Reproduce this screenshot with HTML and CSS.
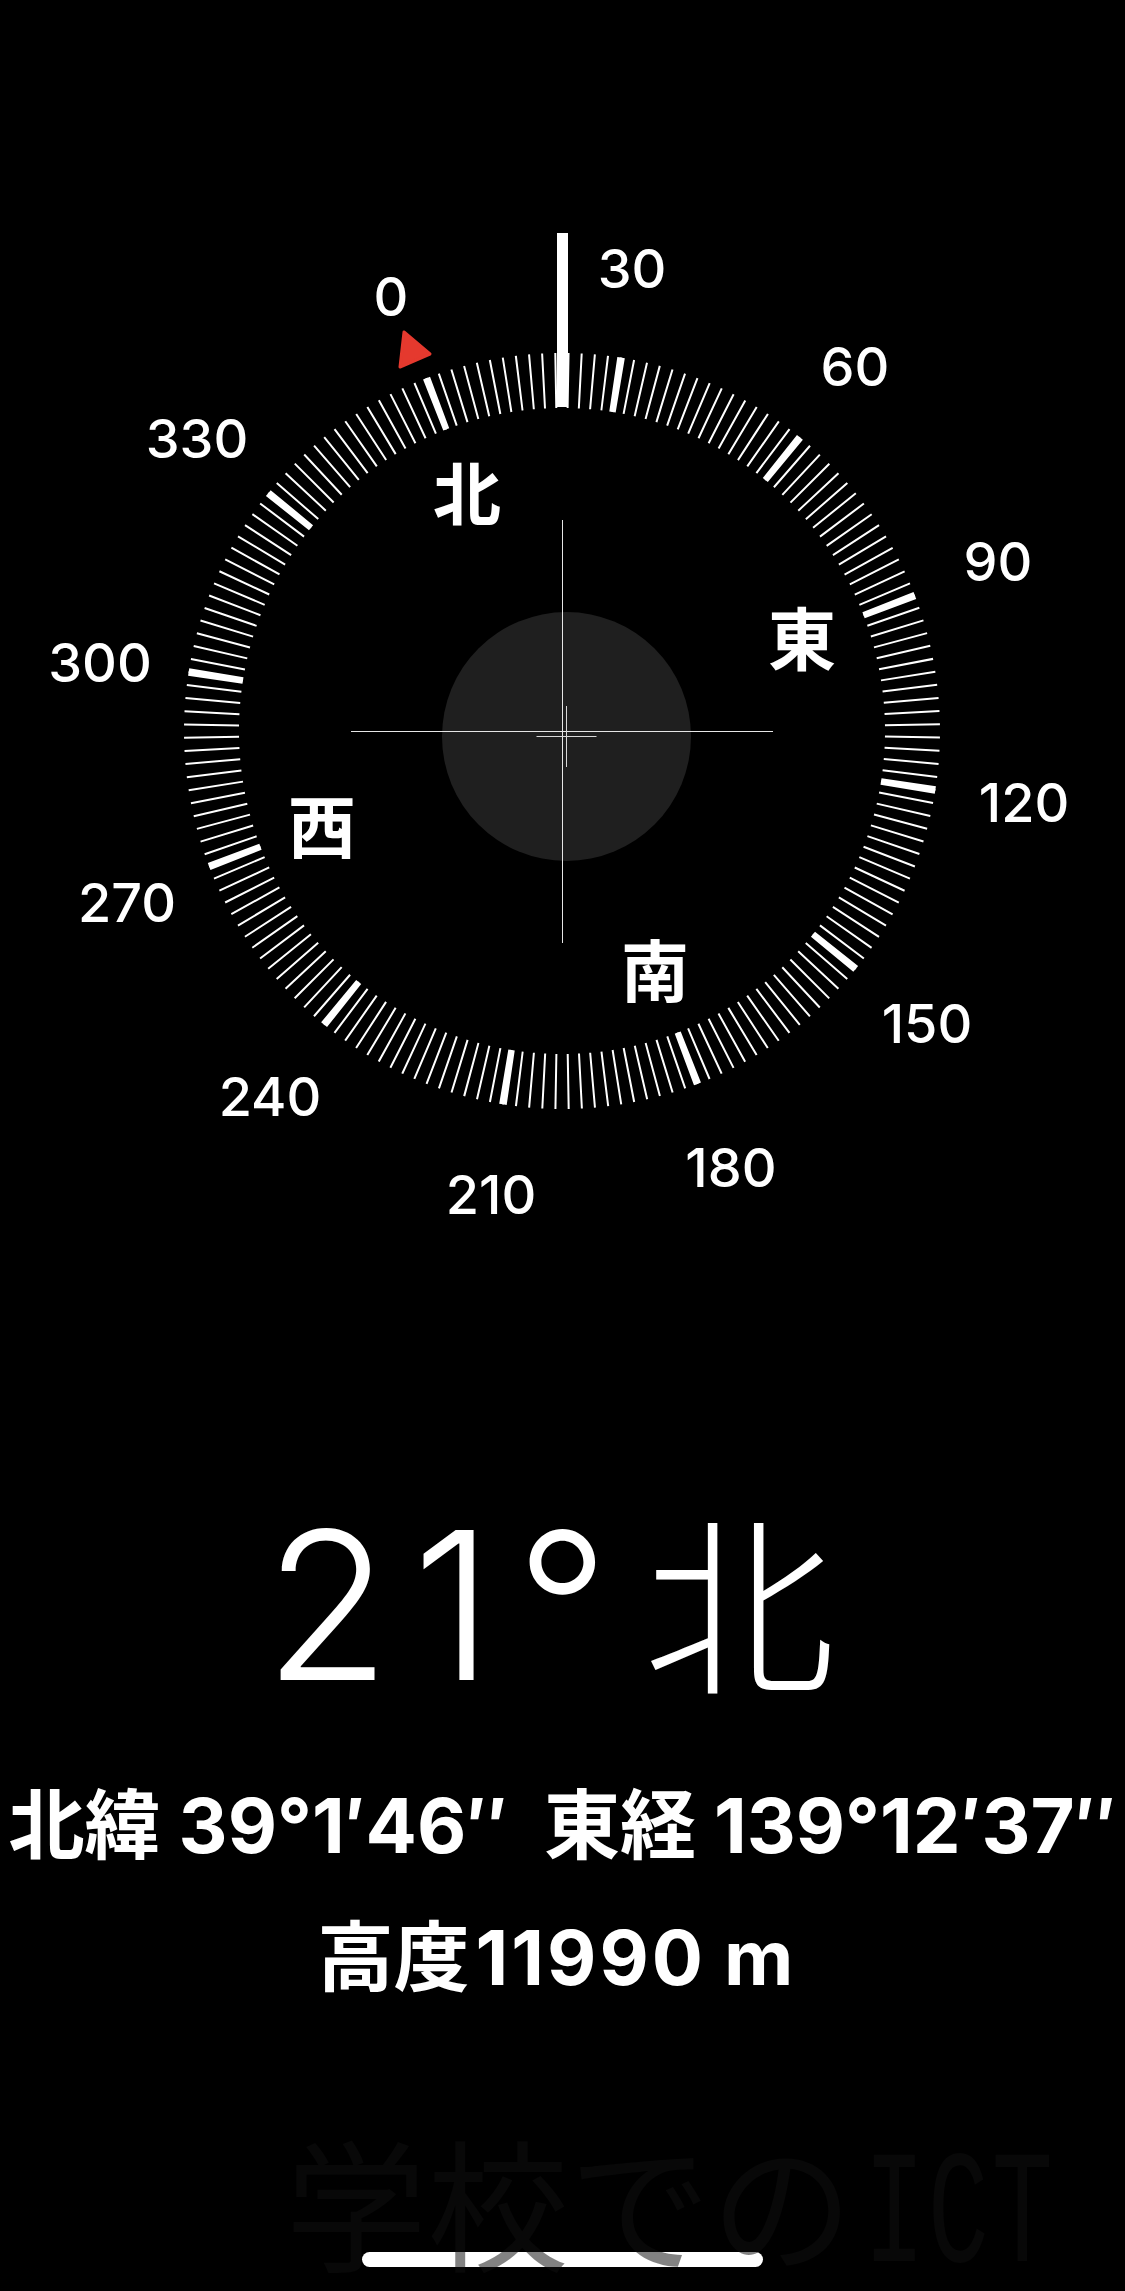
FILE: index.html
```html
<!DOCTYPE html>
<html lang="ja">
<head>
<meta charset="utf-8">
<title>コンパス</title>
<link rel="stylesheet" href="styles.css">
</head>
<body>
<main class="screen">
  <svg class="dial" width="1125" height="1240" viewBox="0 0 1125 1240" xmlns="http://www.w3.org/2000/svg">
    <circle class="bubble" cx="566.5" cy="736.5" r="124.5"/>
    <line class="cross" x1="562.5" y1="520" x2="562.5" y2="943"/>
    <line class="cross" x1="351" y1="731.5" x2="773" y2="731.5"/>
    <line class="cross-small" x1="566.5" y1="706" x2="566.5" y2="767"/>
    <line class="cross-small" x1="536.5" y1="736.5" x2="596.5" y2="736.5"/>
    <g transform="rotate(-111 562 731)">
      <circle class="ticks-minor" cx="562" cy="731" r="350.5" pathLength="360"/>
      <circle class="ticks-major" cx="562" cy="731" r="350.5" pathLength="360"/>
    </g>
    <rect class="heading-bar" x="557" y="233" width="11" height="174"/>
    <polygon class="north-mark" points="404,332 430,354 400,367"/>
    <g class="nums">
      <text x="391" y="316">0</text>
      <text x="632" y="288">30</text>
      <text x="855" y="386">60</text>
      <text x="998" y="581">90</text>
      <text x="1024" y="822">120</text>
      <text x="927" y="1043">150</text>
      <text x="731" y="1187">180</text>
      <text x="491" y="1214">210</text>
      <text x="270" y="1116">240</text>
      <text x="127" y="922">270</text>
      <text x="100" y="682">300</text>
      <text x="197" y="458">330</text>
    </g>
    <g class="cardinals">
      <text x="467" y="520">北</text>
      <text x="802" y="665">東</text>
      <text x="655" y="997">南</text>
      <text x="322" y="853">西</text>
    </g>
  </svg>

  <section class="readout">
    <div class="heading"><span class="heading-deg"><span class="wide">2</span><span class="wide">1</span>°</span> <span class="heading-dir">北</span></div>
    <div class="coords">北緯 39°1′46″&nbsp; 東経 139°12′37″</div>
    <div class="altitude">高度<span class="alt-num">11990</span> m</div>
  </section>

  <div class="watermark">学校での<span class="wm-latin">I</span><span class="wm-latin">C</span><span class="wm-latin">T</span></div>
  <div class="home-indicator"></div>
</main>
</body>
</html>
```

FILE: styles.css
```css
html, body {
  margin: 0;
  padding: 0;
  background: #000;
}

.screen {
  position: relative;
  width: 1125px;
  height: 2291px;
  overflow: hidden;
  background: #000;
  color: #fff;
  font-family: Inter, "Noto Sans CJK JP", sans-serif;
}

.dial {
  display: block;
}

.bubble {
  fill: #1f1f1f;
}

.cross {
  stroke: #e6e6e6;
  stroke-width: 1;
}

.cross-small {
  stroke: #d8d8d8;
  stroke-width: 1;
}

.ticks-minor {
  fill: none;
  stroke: #fff;
  stroke-width: 55;
  stroke-dasharray: 0.327 1.673;
  stroke-dashoffset: 0.1635;
}

.ticks-major {
  fill: none;
  stroke: #fff;
  stroke-width: 55;
  stroke-dasharray: 1.15 28.85;
  stroke-dashoffset: 0.575;
}

.heading-bar {
  fill: #fff;
}

.north-mark {
  fill: #e5392e;
  stroke: #e5392e;
  stroke-width: 3;
  stroke-linejoin: round;
}

.nums text {
  font-family: Inter, "Noto Sans", sans-serif;
  font-weight: 500;
  font-size: 54px;
  fill: #fff;
  text-anchor: middle;
}

.cardinals text {
  font-family: "Noto Sans CJK JP", sans-serif;
  font-weight: 700;
  font-size: 68px;
  fill: #fff;
  text-anchor: middle;
}

.readout {
  text-align: center;
}

.heading {
  margin-top: 210px;
  padding-right: 26px;
  height: 310px;
  font-size: 206px;
  line-height: 310px;
  font-weight: 300;
  word-spacing: -24px;
  white-space: nowrap;
}

.wide {
  letter-spacing: 22px;
}

.heading-dir {
  font-size: 192px;
  font-weight: 300;
}

.coords {
  margin-top: 15px;
  height: 100px;
  font-size: 76px;
  line-height: 100px;
  font-weight: 700;
  white-space: nowrap;
}

.altitude {
  margin-top: 32px;
  padding-right: 14px;
  height: 100px;
  font-size: 76px;
  line-height: 100px;
  font-weight: 700;
  white-space: nowrap;
}

.alt-num {
  margin-left: 6px;
  letter-spacing: 3px;
}

.watermark {
  position: relative;
  z-index: 2;
  margin-top: 121px;
  padding-left: 285px;
  height: 142px;
  font-family: "Noto Sans CJK JP", sans-serif;
  font-size: 142px;
  line-height: 142px;
  font-weight: 400;
  color: rgba(16, 16, 16, 0.52);
  white-space: nowrap;
}

.wm-latin {
  display: inline-block;
  width: 64px;
  text-align: center;
  font-family: "Liberation Mono", monospace;
  font-weight: 400;
  font-size: 120px;
  line-height: 120px;
  transform: scale(0.85, 1.35);
  transform-origin: 50% 92px;
}

.wm-latin:first-child {
  margin-left: 6px;
}

.home-indicator {
  position: absolute;
  z-index: 1;
  left: 362px;
  top: 2252px;
  width: 401px;
  height: 15px;
  border-radius: 8px;
  background: #fff;
}
```
